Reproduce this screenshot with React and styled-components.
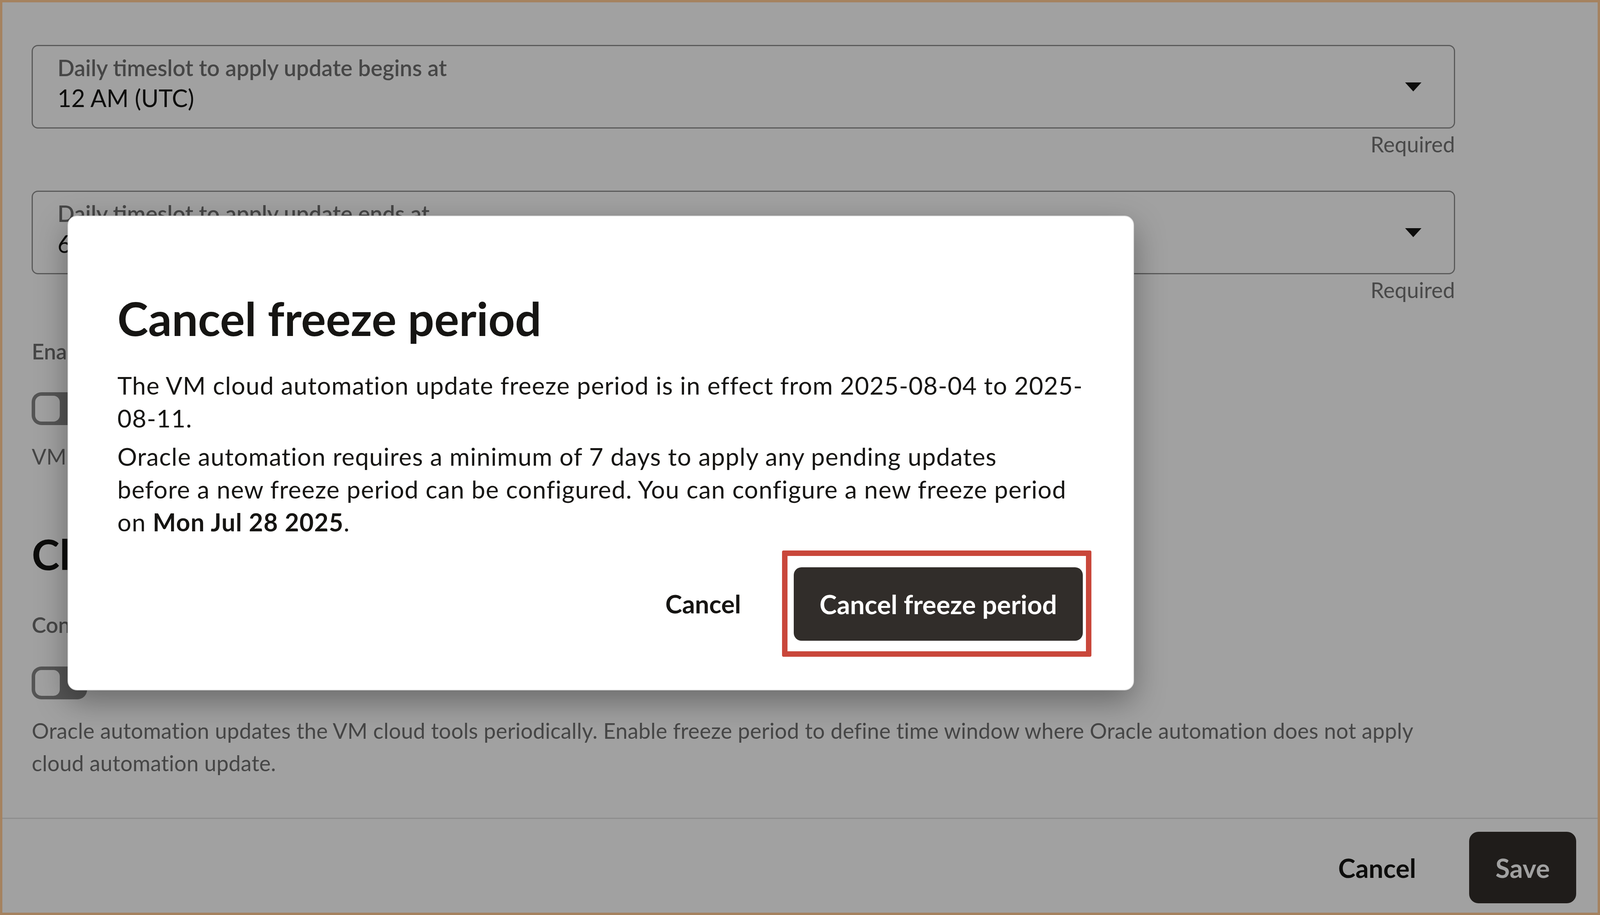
import React from "react";
import styled, { createGlobalStyle } from "styled-components";

// the page is drawn for a 4299px wide canvas; horizontal sizes follow the viewport width
const u = (n) => `calc(var(--u) * ${n})`;

const GlobalStyle = createGlobalStyle`
  :root {
    --u: calc(100vw / 4299);
  }
  html, body {
    margin: 0;
    padding: 0;
    overflow: hidden;
  }
  body {
    font-family: Lato, "Noto Sans", sans-serif;
    color: #161513;
  }
  * {
    box-sizing: border-box;
  }
`;

const Frame = styled.div`
  position: relative;
  width: 100vw;
  height: 100vh;
  border: 6px solid #a5825f;
  background: #ffffff;
  display: flex;
  flex-direction: column;
  overflow: hidden;
`;

const Content = styled.main`
  flex: 1;
  padding: 109px 0 0 ${u(79)};
`;

const Form = styled.div`
  width: ${u(3824)};
  display: flex;
  flex-direction: column;
`;

const Select = styled.div`
  height: 214px;
  margin-top: ${(p) => p.$top || 0}px;
  border: 3px solid #8f8f8f;
  border-radius: 16px;
  padding: 0 ${u(87)} 0 ${u(66)};
  display: flex;
  align-items: center;
  justify-content: space-between;
`;

const SelectText = styled.div`
  display: flex;
  flex-direction: column;
  padding-bottom: 14px;
`;

const SelectLabel = styled.span`
  font-size: ${u(60)};
  line-height: 72px;
  font-weight: 600;
  color: #707070;
  white-space: nowrap;
`;

const SelectValue = styled.span`
  font-size: ${u(64)};
  line-height: 84px;
  color: #161513;
  white-space: nowrap;
`;

const CaretIcon = styled.svg`
  width: ${u(44)};
  height: 23px;
  flex-shrink: 0;
`;

const Required = styled.div`
  margin-top: 8px;
  text-align: right;
  font-size: ${u(58)};
  line-height: 64px;
  color: #747474;
`;

const FieldLabel = styled.div`
  margin-top: ${(p) => p.$top}px;
  font-size: ${u(58)};
  line-height: 70px;
  font-weight: 600;
  color: #707070;
  white-space: nowrap;
`;

const Helper = styled.div`
  margin-top: ${(p) => p.$top}px;
  font-size: ${u(58)};
  line-height: 70px;
  color: #707070;
  white-space: nowrap;
`;

const SectionTitle = styled.h2`
  margin: 147px 0 0;
  font-size: ${u(113)};
  line-height: 136px;
  font-weight: 700;
  color: #161513;
  white-space: nowrap;
`;

const SwitchTrack = styled.div`
  margin-top: ${(p) => p.$top}px;
  width: ${u(149)};
  height: 84px;
  padding: 9px;
  border-radius: 25px;
  background: #878787;
  display: flex;
`;

const SwitchKnob = styled.div`
  width: ${u(66)};
  height: 66px;
  border-radius: 16px;
  background: #ffffff;
`;

const Description = styled.p`
  margin: 38px 0 0;
  font-size: ${u(58)};
  line-height: 83px;
  letter-spacing: ${u(0.25)};
  color: #707070;
  white-space: nowrap;
`;

const Footer = styled.footer`
  height: 243px;
  flex-shrink: 0;
  border-top: 3px solid #e1e1e1;
  padding: 9px ${u(58)} 0 0;
  display: flex;
  justify-content: flex-end;
  align-items: center;
`;

const GhostButton = styled.button`
  border: none;
  background: none;
  padding: 0 ${u(48)};
  font-family: inherit;
  font-size: ${(p) => u(p.$size || 70)};
  font-weight: 700;
  color: #161513;
  cursor: pointer;
  margin-right: ${(p) => u(p.$gap || 0)};
`;

const SolidButton = styled.button`
  width: ${(p) => u(p.$w)};
  height: ${(p) => p.$h}px;
  flex-shrink: 0;
  border: none;
  border-radius: ${(p) => p.$r}px;
  background: #312d2a;
  color: #ffffff;
  font-family: inherit;
  font-size: ${u(70)};
  font-weight: 700;
  white-space: nowrap;
  cursor: pointer;
`;

const Backdrop = styled.div`
  position: absolute;
  inset: 0;
  background: rgba(0, 0, 0, 0.37);
  padding: 546px 0 0 ${u(175)};
  display: flex;
  align-items: flex-start;
`;

const Dialog = styled.div`
  width: ${u(2866)};
  background: #ffffff;
  border: 2px solid #e2e2e2;
  border-radius: 24px;
  padding: 185px ${u(113)} 84px ${u(132)};
  box-shadow: 0 28px 80px rgba(0, 0, 0, 0.35);
`;

const DialogTitle = styled.h1`
  margin: 0;
  font-size: ${u(125)};
  line-height: 149px;
  font-weight: 700;
  color: #161513;
  white-space: nowrap;
`;

const DialogBody = styled.div`
  margin-top: 56px;
  display: flex;
  flex-direction: column;
  gap: 14px;
`;

const Paragraph = styled.p`
  margin: 0;
  font-size: ${u(66)};
  line-height: 84px;
  letter-spacing: ${u(1.3)};
  color: #161513;
  white-space: nowrap;

  strong {
    font-weight: 700;
  }
`;

const Actions = styled.div`
  margin-top: 31px;
  display: flex;
  justify-content: flex-end;
  align-items: center;
`;

const Highlight = styled.div`
  border: 14px solid #c9473b;
  border-radius: 4px;
  padding: 29px ${u(8)} 27px ${u(17)};
  display: flex;
`;

function Caret() {
  return (
    <CaretIcon viewBox="0 0 44 23" preserveAspectRatio="none">
      <path d="M0 0 H44 L22 23 Z" fill="#161513" />
    </CaretIcon>
  );
}

function SelectField({ top, label, value }) {
  return (
    <>
      <Select $top={top}>
        <SelectText>
          <SelectLabel>{label}</SelectLabel>
          <SelectValue>{value}</SelectValue>
        </SelectText>
        <Caret />
      </Select>
      <Required>Required</Required>
    </>
  );
}

function Toggle({ top }) {
  return (
    <SwitchTrack $top={top}>
      <SwitchKnob />
    </SwitchTrack>
  );
}

export default function App() {
  return (
    <>
      <GlobalStyle />
      <Frame>
        <Content>
          <Form>
            <SelectField label="Daily timeslot to apply update begins at" value="12 AM (UTC)" />
            <SelectField top={87} label="Daily timeslot to apply update ends at" value="6 AM (UTC)" />
            <FieldLabel $top={90}>Enable freeze period</FieldLabel>
            <Toggle top={70} />
            <Helper $top={45}>VM cloud automation update freeze period is enabled</Helper>
            <SectionTitle>Cloud automation update</SectionTitle>
            <FieldLabel $top={78}>Configure cloud automation update freeze period</FieldLabel>
            <Toggle top={72} />
            <Description>
              Oracle automation updates the VM cloud tools periodically. Enable freeze period to define time window where Oracle automation does not apply
              <br />
              cloud automation update.
            </Description>
          </Form>
        </Content>
        <Footer>
          <GhostButton $gap={95}>Cancel</GhostButton>
          <SolidButton $w={287} $h={183} $r={24}>Save</SolidButton>
        </Footer>
        <Backdrop>
          <Dialog role="dialog">
            <DialogTitle>Cancel freeze period</DialogTitle>
            <DialogBody>
              <Paragraph>
                The VM cloud automation update freeze period is in effect from 2025-08-04 to 2025-
                <br />
                08-11.
              </Paragraph>
              <Paragraph>
                Oracle automation requires a minimum of 7 days to apply any pending updates
                <br />
                before a new freeze period can be configured. You can configure a new freeze period
                <br />
                on <strong>Mon Jul 28 2025</strong>.
              </Paragraph>
            </DialogBody>
            <Actions>
              <GhostButton $gap={62} $size={68}>Cancel</GhostButton>
              <Highlight>
                <SolidButton $w={777} $h={188} $r={20}>Cancel freeze period</SolidButton>
              </Highlight>
            </Actions>
          </Dialog>
        </Backdrop>
      </Frame>
    </>
  );
}
